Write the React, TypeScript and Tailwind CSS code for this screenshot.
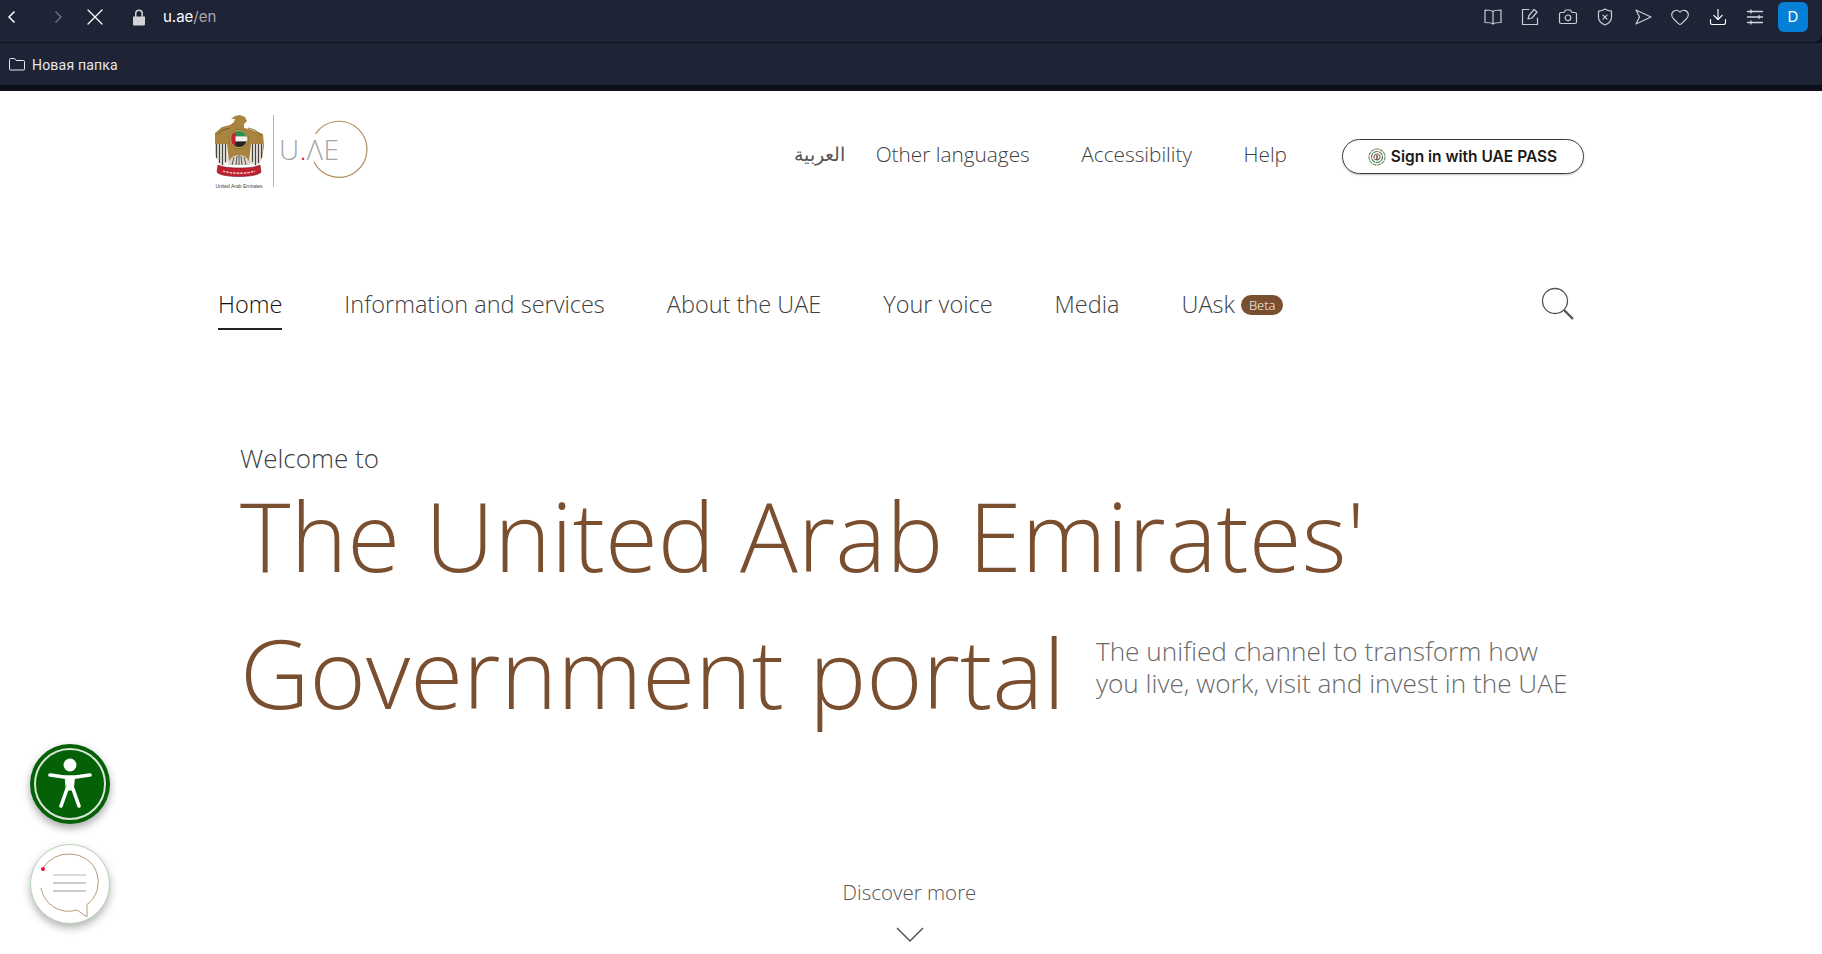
import { Download, Heart, X } from "lucide-react";

const topLinks = ["Other languages", "Accessibility", "Help"];
const navLinks = ["Information and services", "About the UAE", "Your voice", "Media"];

function ToolbarIcon({ children }: { children: React.ReactNode }) {
  return (
    <svg className="size-[20px] text-[#c9ccd2]" viewBox="0 0 20 20" fill="none" stroke="currentColor" strokeWidth="1.2" strokeLinecap="round" strokeLinejoin="round">
      {children}
    </svg>
  );
}

function BrowserBar() {
  return (
    <div className="bg-[#11131f] font-['Inter',sans-serif]">
      <div className="flex h-[42px] items-center rounded-br-lg bg-[#1e2336] pb-[8px]">
        <svg className="ml-[5px] size-[14px] text-white" viewBox="0 0 14 14" fill="none" stroke="currentColor" strokeWidth="1.5">
          <path d="M9.5 1.5 4 7l5.5 5.5" />
        </svg>
        <svg className="ml-[32px] size-[14px] text-[#6a6e7c]" viewBox="0 0 14 14" fill="none" stroke="currentColor" strokeWidth="1.5">
          <path d="M4.5 1.5 10 7l-5.500 5.500" />
        </svg>
        <X className="ml-[16px] size-[28px] text-white" strokeWidth={1.1} />
        <svg className="ml-[23px] h-[17px] w-[14px]" viewBox="0 0 14 17" fill="#d0d2d6">
          <path d="M1 7.500h12v8a1 1 0 0 1-1 1H2a1 1 0 0 1-1-1zM3 7.500V4.500a4 4 0 0 1 8 0v3H9.500v-3a2.500 2.500 0 0 0-5 0v3z" />
        </svg>
        <span className="ml-[17px] text-[15px] text-white">
          u.ae<span className="text-[#a6a9b2]">/en</span>
        </span>
        <div className="ml-auto flex items-center gap-[17.500px] pr-[14px]">
          <ToolbarIcon>
            <path d="M10 4.500C9 3.500 7 3 2 3v12.500c5 0 7 .5 8 1.500 1-1 3-1.500 8-1.500V3c-5 0-7 .5-8 1.500zM10 4.500V17" />
          </ToolbarIcon>
          <ToolbarIcon>
            <path d="M9 2.500H2.500v15h15V11M8 12l1-3.500 5-6 3 2.500-5 6z" />
          </ToolbarIcon>
          <ToolbarIcon>
            <path d="M1.500 7A1.500 1.500 0 0 1 3 5.500h3L7.500 3h5L14 5.500h3A1.500 1.500 0 0 1 18.500 7v8a1.500 1.500 0 0 1-1.500 1.500H3A1.500 1.500 0 0 1 1.500 15z" />
            <circle cx="10" cy="10.800" r="2.800" />
          </ToolbarIcon>
          <ToolbarIcon>
            <path d="M10 2c2 1.300 4 2 6.500 2.200v6c0 3.500-2.500 6-6.500 7.800-4-1.800-6.500-4.300-6.500-7.800v-6C6 4 8 3.300 10 2zM8 8.200l4 4M12 8.200l-4 4" />
          </ToolbarIcon>
          <ToolbarIcon>
            <path d="M3 3l15 7-15 7 3.500-7z" />
          </ToolbarIcon>
          <Heart className="size-[20px] text-[#d4d6da]" strokeWidth={1.3} />
          <Download className="size-[20px] text-white" strokeWidth={1.4} />
          <svg className="size-[20px] text-[#d4d6da]" viewBox="0 0 20 20" fill="none" stroke="currentColor" strokeWidth="1.300" strokeLinecap="round">
            <path d="M2.500 4.500h15M2.500 10h15M2.500 15.500h15M6 3v3M14 8.500v3M6 14v3" />
          </svg>
          <div className="-ml-[4.500px] flex size-[30px] items-center justify-center rounded-md bg-[#0680d7] text-[15px] text-white">D</div>
        </div>
      </div>
      <div className="mt-px flex h-[42px] items-center bg-[#1e2336] pl-[9px] text-[14px] text-[#e6e7ea]">
        <svg className="size-[16px]" viewBox="0 0 16 14" fill="none" stroke="currentColor" strokeWidth="1">
          <path d="M.5 2.500a1 1 0 0 1 1-1h4l1.500 2h7.500a1 1 0 0 1 1 1v7.500a1 1 0 0 1-1 1h-13a1 1 0 0 1-1-1z" />
        </svg>
        <span className="ml-[7px] mt-[3px] font-['Roboto',sans-serif] tracking-[0.2px]">Новая папка</span>
      </div>
      <div className="h-[6px] bg-[#0d0f1c]" />
    </div>
  );
}

function Emblem() {
  return (
    <svg className="h-[63px] w-[50px]" viewBox="0 0 50 63">
      {/* wings and body */}
      <path d="M1 18 8 12l8-2 4-3 1-3-4 0 4-3 5-1 5 2 2 4-3 3 0 4 5 1 6 2 8 3 1 12-2 12-5 8-12-6H17L7 51l-5-9-1-12z" fill="#a8843f" />
      <path d="M3 20 9 15l7-2M47 20l-6-5-7-2" stroke="#6f5524" strokeWidth="0.800" fill="none" />
      <path d="M1 29h12l2 17-8 6-5-10zM49 29H37l-2 17 8 6 5-10z" fill="#eae6de" />
      <path d="M2.500 29v14M5.500 29v19M8.500 29v21M11.500 29v18M47.500 29v14M44.500 29v19M41.500 29v21M38.500 29v18" stroke="#45433f" strokeWidth="1.200" />
      {/* shield */}
      <circle cx="25" cy="24" r="9.500" fill="#c9a65c" stroke="#7a5c26" strokeWidth="0.700" />
      <clipPath id="shield">
        <circle cx="25" cy="24" r="8" />
      </clipPath>
      <g clipPath="url(#shield)">
        <rect x="16" y="16" width="18" height="5.500" fill="#2f8f4e" />
        <rect x="16" y="21.500" width="18" height="5" fill="#f2f2f2" />
        <rect x="16" y="26.500" width="18" height="6" fill="#222" />
        <rect x="16" y="16" width="5.500" height="17" fill="#c8202f" />
      </g>
      {/* tail */}
      <path d="M14 50c1-6 5-10 11-10s10 4 11 10z" fill="#ddd8cd" />
      <path d="M18 50l2-8M22 50l1-9M25 50v-10M28 50l-1-9M32 50l-2-8" stroke="#45433f" strokeWidth="0.900" />
      {/* scroll */}
      <path d="M4 50c6 4 36 4 42 0l1 7c-3 6-41 6-44 0z" fill="#c2202f" stroke="#6b1a1f" strokeWidth="0.600" />
      <path d="M9 56c8 3 24 3 32 0" stroke="#f5dede" strokeWidth="1.300" strokeDasharray="2.500 1" fill="none" />
    </svg>
  );
}

function Logo() {
  return (
    <div className="flex items-start">
      <div className="flex w-[50px] flex-col items-center">
        <Emblem />
        <span className="mt-[6px] whitespace-nowrap font-['Liberation_Sans',sans-serif] text-[5px] leading-[5px] text-[#444]">United Arab Emirates</span>
      </div>
      <div className="ml-[9px] h-[72px] w-px bg-[#b5b5b5]" />
      <div className="relative ml-[5px] mt-[5px] flex h-[58px] w-[88px] items-center">
        <span className="font-['Open_Sans',sans-serif] text-[28px] font-light leading-none tracking-[0.5px] text-[#a2a4a6]">
          U<span className="text-[#d4213d]">.</span>ΛE
        </span>
        <svg className="absolute left-[31px] top-0 size-[58px]" viewBox="0 0 58 58" fill="none" stroke="#b08d5e" strokeWidth="1.200">
          <path d="M5.500 14A28 28 0 1 1 4 42" />
        </svg>
      </div>
    </div>
  );
}

function Header() {
  return (
    <header className="flex items-start justify-between pt-[24px]">
      <Logo />
      <div className="flex items-center pt-[24px] font-['Open_Sans',sans-serif] text-[20.800px] font-light text-[#404040]">
        <span className="pb-[4px] font-['Noto_Sans','DejaVu_Sans',sans-serif] text-[19px] text-[#555]">العربية</span>
        <div className="ml-[31px] flex gap-[51.500px] pb-[4px]">
          {topLinks.map((link) => (
            <a key={link}>{link}</a>
          ))}
        </div>
        <button className="ml-[55px] flex h-[35px] w-[242px] items-center justify-center gap-[4px] rounded-full border border-[#3a3a3a] pr-[2px] font-['Inter',sans-serif] text-[15.500px] font-semibold text-[#1a1a1a] shadow-[0_1px_2px_rgba(0,0,0,0.25)]" type="button">
          <svg className="size-[20px]" viewBox="0 0 20 20" fill="none" strokeWidth="1.200" strokeLinecap="round">
            <circle cx="10" cy="10" r="8" stroke="#8a8a6a" strokeDasharray="3 1.500" />
            <circle cx="10" cy="10" r="5.500" stroke="#3c8a68" strokeDasharray="4 1.500" />
            <circle cx="10" cy="10" r="3" stroke="#a0563c" strokeDasharray="3 1" />
            <path d="M10 8.500v4" stroke="#333" />
          </svg>
          Sign in with UAE PASS
        </button>
      </div>
    </header>
  );
}

function Nav() {
  return (
    <nav className="mt-[99px] flex h-[60px] items-start justify-between pl-[4px] pr-[9px] font-['Open_Sans',sans-serif] text-[23.500px] font-light text-[#404040]">
      <div className="flex gap-[62px]">
        <a className="border-b-2 border-[#222] pb-[7px] leading-[33px] text-[#111]">Home</a>
        {navLinks.map((link) => (
          <a className="leading-[33px]" key={link}>
            {link}
          </a>
        ))}
        <a className="flex items-center gap-[6px] self-start leading-[33px]">
          UAsk
          <span className="rounded-full bg-[#7a4f2f] px-[8px] text-[13px] leading-[20px] text-white">Beta</span>
        </a>
      </div>
      <svg className="mt-[-1px] size-[34px] text-[#555]" viewBox="0 0 34 34" fill="none" stroke="currentColor">
        <circle cx="14" cy="14" r="12.500" strokeWidth="1.300" />
        <path d="m23 23 9 9" strokeWidth="2.400" />
      </svg>
    </nav>
  );
}

function Hero() {
  return (
    <section className="mt-[94px] pl-[26px] font-['Open_Sans',sans-serif]">
      <p className="text-[26px] font-light leading-[33px] text-[#404040]">Welcome to</p>
      <h1 className="mt-px text-[96.200px] font-light leading-[117px] text-[#7a4f2f]">The United Arab Emirates'</h1>
      <div className="mt-[20px] flex items-center">
        <h2 className="text-[96.200px] font-light leading-[117px] text-[#7a4f2f]">Government portal</h2>
        <p className="ml-[31px] pb-[9px] text-[26.200px] font-light leading-[32px] text-[#6a6a6a]">
          The unified channel to transform how
          <br />
          you live, work, visit and invest in the UAE
        </p>
      </div>
    </section>
  );
}

function FloatingButtons() {
  return (
    <div className="absolute left-[30px] top-[744px] flex flex-col gap-[20px]">
      <div className="flex size-[80px] items-center justify-center rounded-full bg-[#056105] shadow-[0_4px_8px_rgba(0,0,0,0.35)]">
        <div className="flex size-[72px] items-center justify-center rounded-full border-2 border-[#d9e6d9]">
          <svg className="h-[52px] w-[46px]" viewBox="0 0 46 52" fill="white" stroke="white" strokeLinecap="round" strokeLinejoin="round">
            <circle cx="23" cy="7" r="6.500" stroke="none" />
            <path d="M3 17c6 .8 12 2 16 2h8c4 0 10-1.200 16-2" fill="none" strokeWidth="3.600" />
            <path d="M18.500 19h9l-1.200 13h-6.600z" strokeWidth="1" />
            <path d="M20 31 14 48M26 31l6 17" fill="none" strokeWidth="3.600" />
          </svg>
        </div>
      </div>
      <div className="flex size-[80px] items-center justify-center rounded-full border border-[#b9d4b9] bg-white shadow-[0_4px_8px_rgba(0,0,0,0.3)]">
        <svg className="size-[78px]" viewBox="1 1 78 78" fill="none">
          <path d="M13 24A30 30 0 0 1 40 10a28 28 0 0 1 17 50.500V73l-10-7A28 28 0 0 1 11 44" stroke="#b99a78" strokeWidth="1" />
          <circle cx="13" cy="25" r="2" fill="#e0103a" />
          <path d="M23 31h33" stroke="#cfcfcf" strokeWidth="1.500" />
          <path d="M23 39h33M23 47h33" stroke="#9a9a9a" strokeWidth="1" />
        </svg>
      </div>
    </div>
  );
}

export default function App() {
  return (
    <div className="relative h-[954px] w-[1822px] overflow-hidden bg-white">
      <BrowserBar />
      <main className="mx-auto w-[1370px] -translate-x-[12px]">
        <Header />
        <Nav />
        <Hero />
        <div className="mt-[149px] flex flex-col items-center pl-[21px] font-['Open_Sans',sans-serif] text-[#555]">
          <span className="text-[20.500px] font-light leading-[27px]">Discover more</span>
          <svg className="mt-[21px] h-[16px] w-[28px]" viewBox="0 0 28 16" fill="none" stroke="currentColor" strokeWidth="1.500">
            <path d="m1 1 13 13L27 1" />
          </svg>
        </div>
      </main>
      <FloatingButtons />
    </div>
  );
}
